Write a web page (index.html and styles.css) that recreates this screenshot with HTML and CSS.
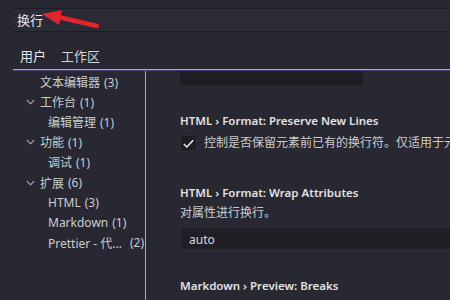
FILE: index.html
```html
<!DOCTYPE html>
<html lang="zh-CN">
<head>
  <meta charset="UTF-8">
  <title>设置</title>
  <link rel="stylesheet" href="styles.css">
</head>
<body>
  <div class="search"><span>换行</span></div>

  <div class="tabs">
    <span class="tab active">用户</span>
    <span class="tab">工作区</span>
  </div>

  <div class="main">
    <nav class="toc">
      <div class="row lvl1"><span class="name">文本编辑器</span> <span class="count">(3)</span></div>
      <div class="row lvl1 open"><svg class="chev" viewBox="0 0 10 6"><path d="M1 1l4 4 4-4"/></svg><span class="name">工作台</span> <span class="count">(1)</span></div>
      <div class="row lvl2"><span class="name">编辑管理</span> <span class="count">(1)</span></div>
      <div class="row lvl1 open"><svg class="chev" viewBox="0 0 10 6"><path d="M1 1l4 4 4-4"/></svg><span class="name">功能</span> <span class="count">(1)</span></div>
      <div class="row lvl2"><span class="name">调试</span> <span class="count">(1)</span></div>
      <div class="row lvl1 open"><svg class="chev" viewBox="0 0 10 6"><path d="M1 1l4 4 4-4"/></svg><span class="name">扩展</span> <span class="count">(6)</span></div>
      <div class="row lvl2"><span class="name">HTML</span> <span class="count">(3)</span></div>
      <div class="row lvl2"><span class="name">Markdown</span> <span class="count">(1)</span></div>
      <div class="row lvl2 cut"><span class="name">Prettier - 代...</span><span class="count">(2)</span></div>
    </nav>

    <div class="settings">
      <div class="input-stub"></div>

      <div class="setting">
        <div class="title">HTML › Format: Preserve New Lines</div>
        <label class="check">
          <span class="box"><svg viewBox="0 0 16 16"><path d="M3 8.5l3.2 3.2L13 4.5"/></svg></span>
          <span class="desc">控制是否保留元素前已有的换行符。仅适用于元素，不适用于标记或文本。</span>
        </label>
      </div>

      <div class="setting">
        <div class="title">HTML › Format: Wrap Attributes</div>
        <div class="desc">对属性进行换行。</div>
        <div class="select">auto</div>
      </div>

      <div class="setting">
        <div class="title">Markdown › Preview: Breaks</div>
        <label class="check">
          <span class="box"></span>
          <span class="desc">设置换行符如何在 markdown 预览中呈现。将其设置为 "true" 会为段落内的新行创建 &lt;br&gt;。</span>
        </label>
      </div>
    </div>
  </div>

  <!-- red annotation arrow pointing at the search text -->
  <svg class="arrow" width="120" height="40" viewBox="0 0 120 40">
    <path d="M97 26L58 17" stroke="#e2262b" stroke-width="4.5" stroke-linecap="round"/>
    <polygon points="42,14 62,10 59,25" fill="#e2262b"/>
  </svg>
</body>
</html>
```

FILE: styles.css
```css
body {
  margin: 0;
  height: 300px;
  overflow: hidden;
  background-color: #272832;
  color: #cccccc;
  font-family: "Noto Sans", "Noto Sans CJK SC", sans-serif;
  font-size: 12px;
}

.search {
  margin: 8px 0 0 13px;
  height: 22px;
  line-height: 22px;
  padding-left: 4px;
  background-color: #2a2b36;
  border-top: 1px solid #1c1d24;
  border-bottom: 1px solid #1c1d24;
  color: #e6e6e6;
  font-size: 13px;
}

.tabs {
  display: flex;
  gap: 15px;
  margin-left: 13px;
  padding: 15px 0 4px 7px;
  line-height: 18px;
  font-size: 13px;
  border-bottom: 1px solid #aca5c8;
  box-shadow: 0 1px 0 #4a3f78;
}

.tab {
  color: #d4d4d4;
}

.tab.active {
  color: #e8e8e8;
}

.main {
  display: flex;
  margin-left: 13px;
  margin-top: 1px;
  height: 240px;
}

.toc {
  width: 132px;
  flex: none;
  padding-top: 1px;
  border-right: 1px solid #aaa1d4;
}

.row {
  display: flex;
  align-items: center;
  height: 20.1px;
  white-space: nowrap;
}

.row .name {
  margin-right: 4px;
}

.lvl1 {
  padding-left: 27px;
}

.lvl1.open {
  padding-left: 13px;
}

.lvl2 {
  padding-left: 35px;
}

.chev {
  width: 9px;
  height: 6px;
  margin-right: 5px;
  fill: none;
  stroke: #b8b8b8;
  stroke-width: 1.2;
}

.row.cut .count {
  margin-left: auto;
  padding-right: 1px;
}

.settings {
  flex: 1;
  min-width: 0;
  padding-left: 34px;
  overflow: hidden;
}

.input-stub {
  width: 183px;
  height: 14px;
  background-color: #1e1e22;
}

.setting {
  margin-top: 26px;
}

.setting + .setting {
  margin-top: 30px;
}

.setting:last-child {
  margin-top: 26px;
}

.title {
  line-height: 20px;
  font-size: 11.5px;
  font-weight: 600;
  color: #e2e2e2;
  white-space: nowrap;
}

.desc {
  line-height: 20px;
  white-space: nowrap;
}

.check {
  display: flex;
  align-items: center;
  gap: 7px;
  margin-top: 2px;
}

.box {
  width: 17px;
  height: 17px;
  flex: none;
  box-sizing: border-box;
  background-color: #1d1e23;
  border: 1px solid #2d2e36;
  border-radius: 3px;
}

.box svg {
  display: block;
  width: 15px;
  height: 15px;
  fill: none;
  stroke: #f0f0f0;
  stroke-width: 1.6;
}

.select {
  margin-top: 4px;
  height: 23px;
  line-height: 23px;
  padding-left: 8px;
  background-color: #1f2025;
  border: 1px solid #2b2c33;
  border-right: none;
  box-sizing: border-box;
  color: #d8d8d8;
}

.arrow {
  position: absolute;
  top: 0;
  left: 0;
}
```
